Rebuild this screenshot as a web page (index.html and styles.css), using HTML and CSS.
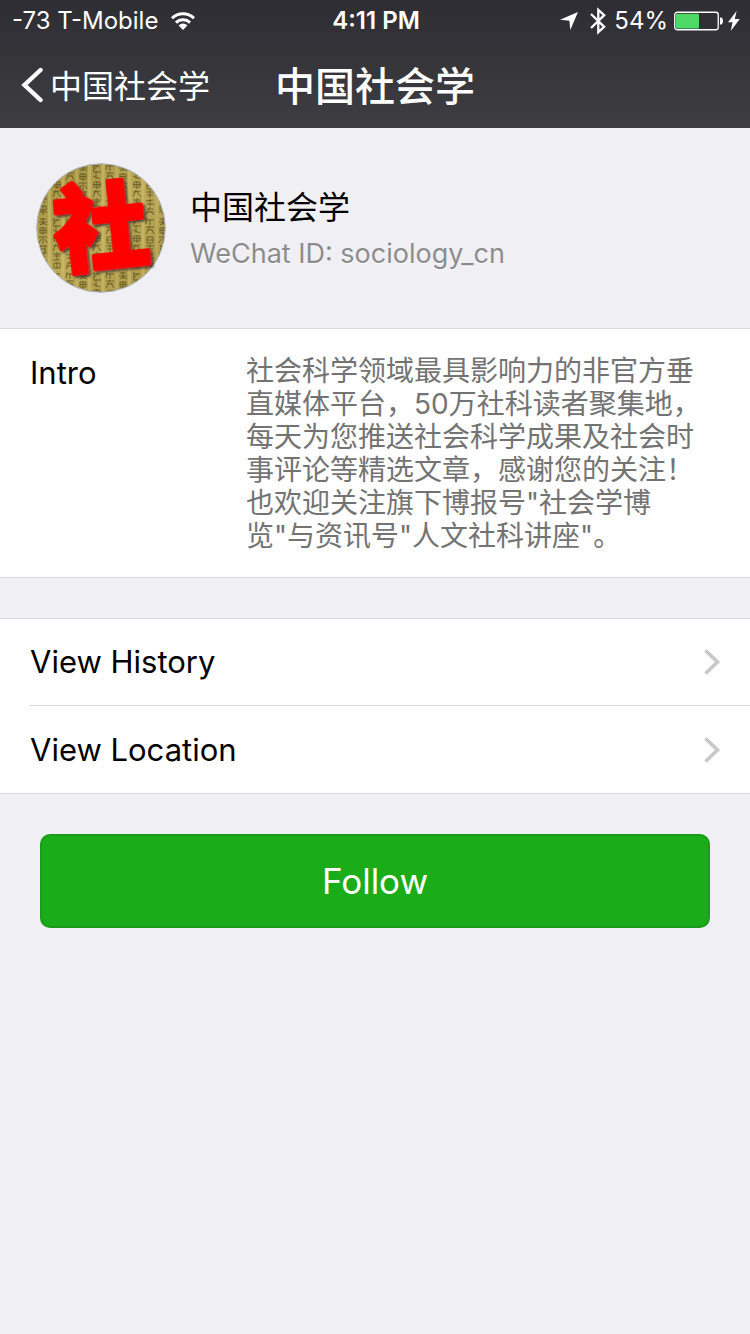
FILE: index.html
```html
<!DOCTYPE html>
<html lang="zh-CN">
<head>
<meta charset="utf-8">
<meta name="viewport" content="width=device-width, initial-scale=1">
<title>中国社会学</title>
<link rel="stylesheet" href="styles.css">
</head>
<body>
<header class="top">
  <div class="status">
    <div class="status-left">
      <span>-73 T-Mobile</span>
      <svg class="icon-wifi" width="26" height="20" viewBox="0 0 26 20" aria-hidden="true">
        <g fill="none" stroke="#fff" stroke-width="3">
          <path d="M2 7.3 A15.6 15.6 0 0 1 24 7.3"/>
          <path d="M6 11.6 A9.9 9.9 0 0 1 20 11.6"/>
        </g>
        <path d="M8.6 14.4 A6.2 6.2 0 0 1 17.4 14.4 L13 19 Z" fill="#fff"/>
      </svg>
    </div>
    <time class="clock">4:11 PM</time>
    <div class="status-right">
      <svg width="18" height="18" viewBox="0 0 18 18" aria-hidden="true"><path d="M18 0 L10.3 18 L9.4 8.7 L0 7.7 Z" fill="#fff"/></svg>
      <svg class="icon-bt" width="16" height="28" viewBox="0 0 16 28" aria-hidden="true"><path d="M1 7 L14.2 19.8 L8.300 25.2 V2.8 L14.2 8.2 L1 21" fill="none" stroke="#fff" stroke-width="2.300"/></svg>
      <span>54%</span>
      <svg class="icon-battery" width="50" height="20" viewBox="0 0 50 20" aria-hidden="true">
        <rect x="0.75" y="1.25" width="43.5" height="17.5" rx="2.5" fill="none" stroke="#fff" stroke-width="1.3"/>
        <rect x="2" y="2.7" width="23" height="14.8" rx="1" fill="#4cd964"/>
        <path d="M46 6.5 H47.5 Q49 7 49 10 Q49 13 47.5 13.5 H46 Z" fill="#fff"/>
      </svg>
      <svg width="12" height="20" viewBox="0 0 12 20" aria-hidden="true"><path d="M8.6 0 L0 11.2 H4.6 L2.7 20 L11.8 8 H6.8 Z" fill="#fff"/></svg>
    </div>
  </div>
  <nav class="nav">
    <button class="back" type="button">
      <svg width="24" height="40" viewBox="0 0 24 40" aria-hidden="true"><path d="M20.500 3 L4.500 18 L20.500 33" fill="none" stroke="#fff" stroke-width="4.4" stroke-linecap="round" stroke-linejoin="miter"/></svg>
      <span>中国社会学</span>
    </button>
    <h1 class="title">中国社会学</h1>
  </nav>
</header>
<main>
  <section class="profile">
    <svg class="avatar" width="130" height="130" viewBox="0 0 130 130" role="img" aria-label="社">
      <defs>
        <clipPath id="disc"><circle cx="65" cy="65" r="64"/></clipPath>
        <linearGradient id="paper" x1="0" y1="0" x2="1" y2="1">
          <stop offset="0" stop-color="#a08f3e"/>
          <stop offset="0.5" stop-color="#bba956"/>
          <stop offset="1" stop-color="#a89648"/>
        </linearGradient>
        <pattern id="script" width="40" height="54" patternUnits="userSpaceOnUse">
          <path d="M0 0 V54 M13.5 0 V54 M27 0 V54" stroke="#d3c272" stroke-width="3" opacity="0.7"/>
          <g fill="none" stroke="#4f4519" stroke-width="1">
            <path d="M4 2h6M3 5h8M7 1v7M4 8l3-2 4 2M4 11h6v5H4zM4 13.500h6M7 10v8M3 20h8M5 22l-2 4M7 20v7M9 22l2 4M4 29h7M4 32h6M5 28v6M9 28v7M3 36h8M5 34l4 6M10 34l-6 7M4 43h6v4H4zM3 49h8M7 42v10"/>
            <path d="M17 3h7M18 1v6M22 2l-5 6M17 9h8M20 8v8M17 13l7 3M18 19h6v5h-6zM17 21.500h8M21 18v8M17 29l7-1M20 27l-3 7M21 29l4 5M17 37h8M18 39h6M21 35v8M17 43h7M18 46h6v5h-6zM21 45v7"/>
            <path d="M31 1l-1 6M31 3h7M34 2v6M30 10h8M31 13h6M34 9l-4 8M35 12l3 5M31 20h6v6h-6zM31 23h6M30 29h8M34 27v8M31 32h6M30 38l7-1M34 36v7M31 41h7M31 46h6M30 49h8M34 44l-4 8M34 48l4 4"/>
          </g>
        </pattern>
        <filter id="soft" x="-20%" y="-20%" width="150%" height="150%"><feDropShadow dx="2" dy="2" stdDeviation="1" flood-color="#3a3030" flood-opacity="0.85"/></filter>
      </defs>
      <g clip-path="url(#disc)">
        <rect width="130" height="130" fill="url(#paper)"/>
        <rect width="130" height="130" fill="url(#script)" opacity="0.72"/>
      </g>
      <circle cx="65" cy="65" r="64.300" fill="none" stroke="#a9acb4" stroke-width="1"/>
      <text class="seal" x="65" y="99" text-anchor="middle" transform="rotate(-6 65 65)" filter="url(#soft)">社</text>
    </svg>
    <div class="who">
      <h2 class="name">中国社会学</h2>
      <p class="wechat-id">WeChat ID: sociology_cn</p>
    </div>
  </section>
  <section class="intro">
    <h3 class="label">Intro</h3>
    <p class="desc">社会科学领域最具影响力的非官方垂直媒体平台，50万社科读者聚集地，每天为您推送社会科学成果及社会时事评论等精选文章，感谢您的关注！也欢迎关注旗下博报号"社会学博<br>览"与资讯号"人文社科讲座"。</p>
  </section>
  <section class="list">
    <a class="row" href="#history">
      <span>View History</span>
      <svg width="18" height="28" viewBox="0 0 18 28" aria-hidden="true"><path d="M2.500 2.500 L14.500 14 L2.500 25.500" fill="none" stroke="#c7c7cc" stroke-width="3.600"/></svg>
    </a>
    <a class="row" href="#location">
      <span>View Location</span>
      <svg width="18" height="28" viewBox="0 0 18 28" aria-hidden="true"><path d="M2.500 2.500 L14.500 14 L2.500 25.500" fill="none" stroke="#c7c7cc" stroke-width="3.600"/></svg>
    </a>
  </section>
  <button class="follow" type="button">Follow</button>
</main>
</body>
</html>
```

FILE: styles.css
```css
* {
  box-sizing: border-box;
}

body {
  margin: 0;
  min-height: 100vh;
  background: #efeff4;
  color: #000;
  font-family: Inter, "Noto Sans CJK SC", sans-serif;
  font-size: 32px;
}

h1, h2, h3, p {
  margin: 0;
  font-weight: 400;
}

svg {
  display: block;
  flex: none;
}

.top {
  background: linear-gradient(#2e2d33, #3e3d42);
  color: #fff;
}

.status {
  display: grid;
  grid-template-columns: 1fr auto 1fr;
  align-items: center;
  padding: 1px 10px 0 12px;
  font-size: 24px;
  line-height: 40px;
}

.status-left,
.status-right {
  display: flex;
  align-items: center;
}

.status-left {
  gap: 12px;
}

.status-right {
  justify-content: flex-end;
}

.icon-bt {
  margin: 0 8px 0 12px;
}

.icon-battery {
  margin: 0 4px 0 6px;
}

.clock {
  font-weight: 600;
}

.nav {
  display: grid;
  grid-template-columns: 1fr auto 1fr;
  align-items: center;
  height: 87px;
  padding: 4px 20px 0;
}

.back {
  display: flex;
  align-items: center;
  gap: 6px;
  padding: 0;
  border: 0;
  background: none;
  color: inherit;
  font: inherit;
  line-height: 40px;
  white-space: nowrap;
}

.title {
  font-size: 40px;
  font-weight: 500;
  line-height: 56px;
}

.profile {
  display: flex;
  align-items: center;
  gap: 24px;
  padding: 35px 36px;
}

.avatar {
  overflow: visible;
}

.seal {
  fill: #fe0000;
  stroke: #fe0000;
  stroke-width: 4px;
  stroke-linejoin: round;
  font-family: "Noto Sans CJK SC", sans-serif;
  font-size: 94px;
  font-weight: 900;
}

.who {
  padding-top: 4px;
}

.name {
  font-size: 32px;
  line-height: 48px;
}

.wechat-id {
  color: #8c8c8c;
  font-size: 27px;
  line-height: 44px;
  text-shadow: 0 1px 0 #fff;
}

.intro {
  display: grid;
  grid-template-columns: 216px 1fr;
  padding: 26px 30px 24px;
  border-top: 1px solid #d9d9d9;
  border-bottom: 1px solid #d9d9d9;
  background: #fff;
}

.label {
  font-size: 31px;
  line-height: 36px;
}

.desc {
  color: #737373;
  font-size: 28px;
  line-height: 33px;
}

.list {
  margin-top: 40px;
  padding-left: 30px;
  border-top: 1px solid #d9d9d9;
  border-bottom: 1px solid #d9d9d9;
  background: #fff;
}

.row {
  display: flex;
  align-items: center;
  justify-content: space-between;
  min-height: 87px;
  padding-right: 29px;
  color: inherit;
  font-size: 31px;
  line-height: 40px;
  text-decoration: none;
}

.row:first-child {
  border-bottom: 1px solid #d9d9d9;
}

.follow {
  display: block;
  width: calc(100% - 80px);
  height: 94px;
  margin: 40px auto;
  border: 2px solid #1a9c1a;
  border-radius: 10px;
  background: #1aad19;
  color: #fff;
  font: inherit;
  font-size: 35px;
}
```
